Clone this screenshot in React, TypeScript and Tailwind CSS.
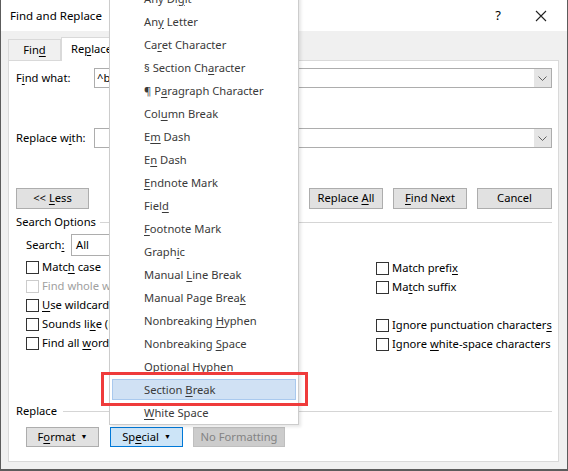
import React from "react";

// "&" marks the mnemonic letter
function mn(s: string) {
  const i = s.indexOf("&");
  if (i < 0) return <span className="whitespace-pre">{s}</span>;
  return (
    <span className="whitespace-pre">
      {s.slice(0, i)}
      <span className="underline underline-offset-[2px]">{s[i + 1]}</span>
      {s.slice(i + 2)}
    </span>
  );
}

const menuItems = [
  "Any Di&git",
  "An&y Letter",
  "Ca&ret Character",
  "§ Section Ch&aracter",
  "¶ P&aragraph Character",
  "Col&umn Break",
  "E&m Dash",
  "E&n Dash",
  "&Endnote Mark",
  "Fiel&d",
  "&Footnote Mark",
  "Graph&ic",
  "Manual &Line Break",
  "Manual Page Brea&k",
  "Nonbreaking &Hyphen",
  "Nonbreaking &Space",
  "&Optional Hyphen",
  "Section &Break",
  "&White Space",
];

function Box({ disabled }: { disabled?: boolean }) {
  return (
    <span
      className={`h-[13px] w-[13px] shrink-0 border bg-white ${
        disabled ? "border-[#cccccc]" : "border-[#333333]"
      }`}
    />
  );
}

function Check({ label, disabled }: { label: string; disabled?: boolean }) {
  return (
    <div className="flex h-[19px] items-center gap-[3px]">
      <Box disabled={disabled} />
      <span className={`whitespace-nowrap ${disabled ? "text-[#a0a0a0]" : ""}`}>
        {mn(label)}
      </span>
    </div>
  );
}

function Btn({
  label,
  w,
  arrow,
  active,
  disabled,
}: {
  label: string;
  w: string;
  arrow?: boolean;
  active?: boolean;
  disabled?: boolean;
}) {
  return (
    <div
      className={`flex h-full items-center justify-center gap-[5px] border ${w} ${
        active
          ? "border-[#0078d7] bg-[#cce4f7]"
          : disabled
          ? "border-[#bfbfbf] bg-[#cccccc] text-[#838383]"
          : "border-[#adadad] bg-[#e1e1e1]"
      }`}
    >
      {mn(label)}
      {arrow && <span className="mt-[1px] text-[7px]">▼</span>}
    </div>
  );
}

function Combo({ w, text }: { w: string; text?: string }) {
  return (
    <div className={`flex h-[20px] items-stretch border border-[#adadad] bg-white ${w}`}>
      <span className="flex-1 pl-[2px] leading-[18px]">{text}</span>
      <span className="flex w-[17px] items-center justify-center bg-[#e5e5e5]">
        <svg width="9" height="5" viewBox="0 0 9 5">
          <path d="M0.5 0.5 L4.5 4.5 L8.5 0.5" fill="none" stroke="#606060" strokeWidth="1" />
        </svg>
      </span>
    </div>
  );
}

export default function App() {
  return (
    <div className="relative h-[471px] w-[568px] overflow-hidden border-x border-b-2 border-[#5c5c5c] bg-[#f0f0f0] font-['Noto_Sans',sans-serif] text-[11.2px] text-black">
      {/* title bar */}
      <div className="flex h-[31px] items-center bg-white pl-[9px] pr-[20px] text-[11.5px]">
        <span className="flex-1">Find and Replace</span>
        <span className="mr-[34px] text-[13px]">?</span>
        <svg width="12" height="12" viewBox="0 0 12 12">
          <path d="M1 1 L11 11 M11 1 L1 11" stroke="#222" strokeWidth="1.1" />
        </svg>
      </div>

      {/* tabs */}
      <div className="flex h-[29px] items-end pl-[7px]">
        <div className="flex h-[21px] w-[53px] items-center justify-center border border-b-0 border-[#d9d9d9]">
          {mn("Fin&d")}
        </div>
        <div className="relative z-10 -mb-px flex h-[24px] w-[66px] items-center border border-b-0 border-[#d9d9d9] bg-white pl-[9px]">
          {mn("Re&place")}
        </div>
      </div>

      {/* panel */}
      <div className="ml-[7px] flex h-[402px] w-[551px] flex-col border border-[#d9d9d9] bg-white">
        <div className="mt-[7px] flex h-[20px] items-center pl-[7px]">
          <span className="w-[78px]">{mn("F&ind what:")}</span>
          <Combo w="w-[458px]" text="^b" />
        </div>
        <div className="mt-[40px] flex h-[20px] items-center pl-[7px]">
          <span className="w-[78px]">{mn("Replace w&ith:")}</span>
          <Combo w="w-[458px]" />
        </div>

        <div className="mt-[40px] flex h-[21px] pl-[7px]">
          <Btn label="<< &Less" w="w-[73px]" />
          <div className="flex-1" />
          <div className="flex h-full gap-[10px] pr-[6px]">
            <Btn label="Replace &All" w="w-[74px]" />
            <Btn label="&Find Next" w="w-[74px]" />
            <Btn label="Cancel" w="w-[75px]" />
          </div>
        </div>

        <div className="mt-[5px] flex h-[16px] items-center gap-[4px] pl-[7px] pr-[6px]">
          <span>Search Options</span>
          <span className="h-px flex-1 bg-[#d5d5d5]" />
        </div>

        <div className="mt-[4px] flex h-[22px] items-center pl-[17px]">
          <span className="w-[45px]">Search{mn("&:")}</span>
          <div className="flex h-full w-[120px] items-center border border-[#adadad] bg-white pl-[4px]">
            All
          </div>
        </div>

        <div className="mt-[2px] flex pl-[17px]">
          <div className="flex w-[350px] flex-col">
            <Check label="Matc&h case" />
            <Check label="Find whole words only" disabled />
            <Check label="&Use wildcards" />
            <Check label="Sounds li&ke (English)" />
            <Check label="Find all &word forms (English)" />
          </div>
          <div className="mt-[1px] flex flex-col">
            <Check label="Match prefi&x" />
            <Check label="Ma&tch suffix" />
            <div className="h-[19px]" />
            <Check label="Ignore punctuation character&s" />
            <Check label="Ignore &white-space characters" />
          </div>
        </div>

        <div className="mt-[49px] flex h-[16px] items-center gap-[6px] pl-[7px] pr-[6px]">
          <span>Replace</span>
          <span className="h-px flex-1 bg-[#d5d5d5]" />
        </div>

        <div className="mt-[8px] flex h-[20px] pl-[17px]">
          <Btn label="F&ormat" w="w-[73px]" arrow />
          <div className="w-[11px]" />
          <Btn label="Sp&ecial" w="w-[73px]" arrow active />
          <div className="w-[10px]" />
          <Btn label="No Formatting" w="w-[92px]" disabled />
        </div>
      </div>

      {/* Special dropdown menu */}
      <div className="absolute left-[108px] top-[-16px] z-20 w-[190px] border border-[#cccccc] bg-white pt-[2px] text-[#3a3a3a] shadow-[2px_2px_3px_rgba(0,0,0,0.1)]">
        {menuItems.map((it) => (
          <div key={it} className="flex h-[23px] items-center px-[2px]">
            <div
              className={`flex h-[21px] w-full items-center border pl-[31px] pt-[1px] ${
                it === "Section &Break"
                  ? "border-[#a9c9ee] bg-[#d0e1f4]"
                  : "border-transparent"
              }`}
            >
              {mn(it)}
            </div>
          </div>
        ))}
      </div>

      {/* red highlight box */}
      <div className="absolute left-[100px] top-[372px] z-30 h-[34px] w-[207px] border-[3px] border-[#ef3b3b]" />
    </div>
  );
}
